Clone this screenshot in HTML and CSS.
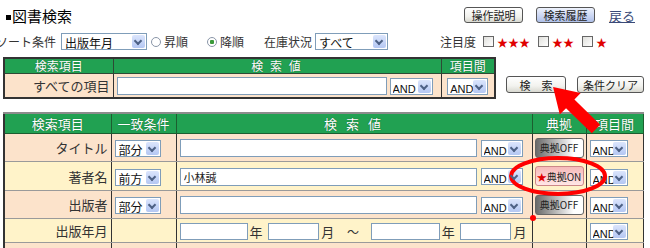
FILE: index.html
```html
<!DOCTYPE html>
<html lang="ja">
<head>
    <meta charset="UTF-8">
    <title>図書検索</title>
    <link rel="stylesheet" href="styles.css">
</head>
<body>
<div class="page">

    <!-- タイトル -->
    <div class="top">
        <h1 class="title"><span class="sq"></span>図書検索</h1>
        <div class="links">
            <button class="btn">操作説明</button>
            <button class="btn btn-blue">検索履歴</button>
            <a href="#" class="back">戻る</a>
        </div>
    </div>

    <!-- ソート条件 -->
    <div class="sort">
        <span class="lbl cut">ソート条件</span>
        <span class="sel s-sort"><select><option>出版年月</option></select></span>
        <label class="radio"><i></i>昇順</label>
        <label class="radio on"><i></i>降順</label>
        <span class="lbl stock">在庫状況</span>
        <span class="sel s-stock"><select><option>すべて</option></select></span>
        <span class="lbl focus">注目度</span>
        <label class="chk"><i></i><b>★★★</b></label>
        <label class="chk"><i></i><b>★★</b></label>
        <label class="chk"><i></i><b>★</b></label>
    </div>

    <!-- 全項目検索 -->
    <div class="search">
        <table class="t1">
            <tr class="head">
                <th class="a1">検索項目</th>
                <th class="a2">検 索 値</th>
                <th class="a3">項目間</th>
            </tr>
            <tr class="pe">
                <td class="name">すべての項目</td>
                <td><input type="text" class="txt w-all"><span class="sel s-and1"><select><option>AND</option></select></span></td>
                <td class="mid"><span class="sel s-and2"><select><option>AND</option></select></span></td>
            </tr>
        </table>
        <div class="actions">
            <button class="btn b-search">検　索</button>
            <button class="btn b-clear">条件クリア</button>
        </div>
    </div>

    <!-- 項目別検索 -->
    <table class="t2">
        <tr class="head">
            <th class="c1">検索項目</th>
            <th class="c2">一致条件</th>
            <th class="c3">検 索 値</th>
            <th class="c4">典拠</th>
            <th class="c5">項目間</th>
        </tr>
        <tr class="pe r1">
            <td class="name">タイトル</td>
            <td><span class="sel s-cond"><select><option>部分</option></select></span></td>
            <td><input type="text" class="txt w-val"><span class="sel s-and3"><select><option>AND</option></select></span></td>
            <td class="mid"><button class="ref">典拠OFF</button></td>
            <td><span class="sel s-and4"><select><option>AND</option></select></span></td>
        </tr>
        <tr class="ye r2">
            <td class="name">著者名</td>
            <td><span class="sel s-cond"><select><option>前方</option></select></span></td>
            <td><input type="text" class="txt w-val" value="小林誠"><span class="sel s-and3"><select><option>AND</option></select></span></td>
            <td class="mid"><button class="ref on"><em>★</em>典拠ON</button></td>
            <td><span class="sel s-and4"><select><option>AND</option></select></span></td>
        </tr>
        <tr class="pe r3">
            <td class="name">出版者</td>
            <td><span class="sel s-cond"><select><option>部分</option></select></span></td>
            <td><input type="text" class="txt w-val"><span class="sel s-and3"><select><option>AND</option></select></span></td>
            <td class="mid"><button class="ref">典拠OFF</button></td>
            <td><span class="sel s-and4"><select><option>AND</option></select></span></td>
        </tr>
        <tr class="ye r4">
            <td class="name">出版年月</td>
            <td></td>
            <td class="dates">
                <input type="text" class="txt y1"><span class="u">年</span>
                <input type="text" class="txt m1"><span class="u">月</span>
                <span class="tilde">〜</span>
                <input type="text" class="txt y2"><span class="u">年</span>
                <input type="text" class="txt m1"><span class="u">月</span>
            </td>
            <td></td>
            <td><span class="sel s-and4"><select><option>AND</option></select></span></td>
        </tr>
        <tr class="pe r5">
            <td class="name"></td><td></td><td></td><td></td><td></td>
        </tr>
    </table>

    <!-- 注釈(赤の矢印と丸) -->
    <svg class="marks" width="650" height="248" viewBox="0 0 650 248">
        <polygon fill="#f00" transform="translate(596 129) rotate(-135.7)"
                 points="0,-6 36,-6 36,-15 60,0 36,15 36,6 0,6"/>
        <ellipse cx="558" cy="176" rx="47" ry="18" fill="none" stroke="#f00" stroke-width="4"/>
        <circle cx="533" cy="218" r="3" fill="#f00"/>
    </svg>
</div>
</body>
</html>
```

FILE: styles.css
```css
*{
    box-sizing: border-box;
}

body{
    margin: 0;
    font-family: "Noto Sans CJK JP", sans-serif;
    font-size: 12px;
    color: #333;
    background-color: #fff;
    overflow: hidden;
}

.page{
    position: relative;
    width: 650px;
    height: 248px;
    overflow: hidden;
}

/* タイトル行 */
.top{
    display: flex;
    align-items: center;
    justify-content: space-between;
    height: 30px;
    padding: 0 15px 0 6px;
}

.title{
    margin: 0;
    font-size: 15px;
    font-weight: normal;
    color: #000;
    display: flex;
    align-items: center;
}

.sq{
    display: inline-block;
    width: 5px;
    height: 5px;
    background-color: #000;
    margin-right: 1px;
    margin-top: 5px;
}

.links{
    display: flex;
    align-items: center;
}

.btn{
    font-family: "Noto Sans CJK JP", sans-serif;
    font-size: 11px;
    color: #222;
    height: 16px;
    padding: 0;
    line-height: 14px;
    border: 1px solid #555;
    border-radius: 3px;
    background: linear-gradient(#ffffff, #f2f2ee 60%, #d8d8d0);
}

.links .btn{
    width: 59px;
    margin-right: 13px;
}

.btn-blue{
    background: linear-gradient(#eef2fc, #c8d4f2 60%, #aebfe8);
}

.back{
    color: #3a4a78;
    font-size: 13px;
    margin-left: 1px;
}

/* ソート条件 */
.sort{
    display: flex;
    align-items: center;
    height: 17px;
    margin-top: 3px;
}

.lbl{
    white-space: nowrap;
}

.cut{
    margin-left: -4px;
    margin-right: 5px;
}

.radio, .chk{
    display: flex;
    align-items: center;
}

.radio i{
    display: inline-block;
    width: 10px;
    height: 10px;
    border: 1px solid #8a96a8;
    border-radius: 50%;
    background: #fff;
    margin: 0 3px 0 4px;
}

.radio.on i{
    background: radial-gradient(circle, #3a9a3a 0 2px, #fff 2.5px);
    margin-left: 19px;
}

.stock{
    margin-left: 20px;
    margin-right: 3px;
}

.focus{
    margin-left: 52px;
    margin-right: 7px;
}

.chk i{
    display: inline-block;
    width: 11px;
    height: 11px;
    border: 1px solid #666;
    background: linear-gradient(135deg, #e0e0dc, #fff);
    margin-right: 3px;
}

.chk b{
    color: #e00000;
    font-weight: normal;
    font-size: 11px;
    margin-right: 8px;
}

/* セレクト(XP風) */
.sel{
    position: relative;
    display: inline-block;
    height: 17px;
    border: 1px solid #7f9db9;
    background-color: #fff;
    vertical-align: middle;
}

.sel select{
    appearance: none;
    -webkit-appearance: none;
    border: 0;
    outline: 0;
    background: transparent;
    font-family: "Liberation Sans", "Noto Sans CJK JP", sans-serif;
    font-size: 12px;
    color: #111;
    width: 100%;
    height: 15px;
    line-height: 15px;
    padding: 0 0 0 3px;
}

.sel::after{
    content: "";
    position: absolute;
    top: 1px;
    right: 1px;
    width: 13px;
    height: 13px;
    border-radius: 2px;
    background: linear-gradient(#dbe5fc, #b4c7f3);
}

.sel::before{
    content: "";
    position: absolute;
    z-index: 1;
    top: 4px;
    right: 5px;
    width: 4px;
    height: 4px;
    border-right: 2px solid #4d6185;
    border-bottom: 2px solid #4d6185;
    transform: rotate(45deg);
}

.s-sort{ width: 86px; }
.s-stock{ width: 73px; }
.s-and1{ width: 43px; margin-left: 3px; }
.s-and2{ width: 41px; }
.s-cond{ width: 46px; }
.s-and3{ width: 42px; margin-left: 4px; }
.s-and4{ width: 38px; }

.s-and1 select, .s-and2 select, .s-and3 select, .s-and4 select{
    font-size: 11px;
    padding-left: 2px;
}

.txt{
    height: 18px;
    border: 1px solid #7f9db9;
    background-color: #fff;
    padding: 0 3px;
    font-family: "Noto Sans CJK JP", sans-serif;
    font-size: 11px;
    color: #222;
    vertical-align: middle;
    outline: 0;
}

.w-all{ width: 270px; }
.w-val{ width: 297px; }

/* 表 */
table{
    border-collapse: collapse;
    table-layout: fixed;
}

th{
    background-color: #21a152;
    color: #fff;
    font-weight: normal;
    padding: 0;
    border: 1px solid #2d4a35;
    text-shadow: 0 0 1px #0b4a22;
}

td{
    padding: 0 0 0 3px;
    border: 1px solid #333;
    white-space: nowrap;
}

.pe td{ background-color: #fce3cb; }
.ye td{ background-color: #fff3c9; }

.name{
    text-align: right;
    padding: 0 3px 0 0;
    font-size: 13px;
    color: #333;
}

.mid{
    text-align: center;
    padding: 0;
}

.search{
    display: flex;
    margin-top: 7px;
}

.t1{
    margin-left: 3px;
    width: 491px;
    border: 2px solid #333;
}

.t1 .head th{ height: 15px; font-size: 12px; line-height: 13px; }
.t1 .pe td{ height: 25px; }
.t1 .a1{ width: 109px; }
.t1 .a2{ width: 328px; letter-spacing: 2px; }
.t1 .a3{ width: 54px; }

.actions{
    display: flex;
    gap: 11px;
    padding-top: 19px;
    margin-left: 10px;
}

.b-search{ width: 60px; height: 17px; }
.b-clear{ width: 67px; height: 17px; }

.t2{
    margin: 13px 0 0 3px;
    width: 639px;
    border-top: 2px solid #8c8c8c;
    border-left: 2px solid #333;
}

.t2 .head th{ height: 19px; font-size: 13px; border-color: #1c5e30; }
.t2 .c1{ width: 107px; }
.t2 .c2{ width: 65px; }
.t2 .c3{ width: 356px; letter-spacing: 3px; }
.t2 .c4{ width: 54px; }
.t2 .c5{ width: 57px; }

.t2 td{
    border-top-color: #9a9a9a;
    border-bottom-color: #9a9a9a;
}

.r1 td{ height: 28px; }
.r2 td{ height: 29px; }
.r3 td{ height: 28px; }
.r4 td{ height: 24px; }
.r5 td{ height: 28px; }

.ref{
    width: 49px;
    height: 20px;
    padding: 0;
    border: 1px solid #666;
    border-radius: 3px;
    font-family: "Noto Sans CJK JP", sans-serif;
    font-size: 10px;
    color: #222;
    background: linear-gradient(90deg, #6a6a6a, #bdbdbd 45%, #ffffff 80%);
}

.ref.on{
    background: linear-gradient(#f6b9b9, #ffe6e6);
    border-color: #c88;
}

.ref em{
    font-style: normal;
    color: #e00000;
}

.dates .txt{ height: 17px; }
.y1{ width: 68px; }
.m1{ width: 51px; }
.y2{ width: 69px; }

.u{
    display: inline-block;
    font-size: 13px;
    margin: 0 3px 0 2px;
    vertical-align: middle;
}

.tilde{
    display: inline-block;
    margin: 0 9px 0 7px;
    vertical-align: middle;
}

/* 注釈 */
.marks{
    position: absolute;
    top: 0;
    left: 0;
    pointer-events: none;
}
```
